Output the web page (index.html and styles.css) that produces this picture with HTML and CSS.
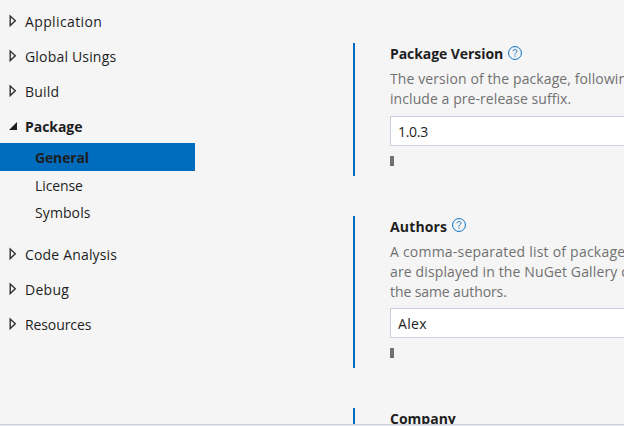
FILE: index.html
```html
<!DOCTYPE html>
<html lang="en">
<head>
<meta charset="utf-8">
<title>Project properties</title>
<link rel="stylesheet" href="styles.css">
</head>
<body>
<svg class="defs" width="0" height="0" aria-hidden="true">
  <symbol id="closed" viewBox="0 0 8 14"><path d="M1.7 2V11.6L6.8 6.8Z" fill="none" stroke="#303030" stroke-width="1.4"/></symbol>
  <symbol id="open" viewBox="0 0 8 14"><path d="M8.5 3V11H.5Z" fill="#1e1e1e"/></symbol>
  <symbol id="help" viewBox="0 0 14 14"><circle cx="7" cy="7" r="6.45" fill="none" stroke="#086fc4" stroke-width="1"/><path d="M5.1 5.3C5.1 2.9 8.9 2.9 8.9 5.2C8.9 6.7 7 6.6 7 8.5" fill="none" stroke="#086fc4" stroke-width="1"/><path d="M6.5 9.6H7.5V10.7H6.5Z" fill="#086fc4"/></symbol>
</svg>
<main class="window">
  <nav class="nav">
    <div class="row"><svg class="arrow"><use href="#closed"/></svg><span class="t-app">Application</span></div>
    <div class="row"><svg class="arrow"><use href="#closed"/></svg><span class="t-usings">Global Usings</span></div>
    <div class="row"><svg class="arrow"><use href="#closed"/></svg><span class="t-build">Build</span></div>
    <div class="row strong"><svg class="arrow"><use href="#open"/></svg><span class="t-package">Package</span></div>
    <div class="children">
      <div class="child selected"><span class="t-general">General</span></div>
      <div class="child"><span class="t-license">License</span></div>
      <div class="child"><span class="t-symbols">Symbols</span></div>
    </div>
    <div class="row"><svg class="arrow"><use href="#closed"/></svg><span class="t-code">Code Analysis</span></div>
    <div class="row"><svg class="arrow"><use href="#closed"/></svg><span class="t-debug">Debug</span></div>
    <div class="row"><svg class="arrow"><use href="#closed"/></svg><span class="t-resources">Resources</span></div>
  </nav>
  <div class="settings">
    <section class="setting version">
      <h2 class="title"><span class="t-version">Package Version</span><svg class="help"><use href="#help"/></svg></h2>
      <p class="desc"><span class="d-one">The version of the package, following</span><br><span class="d-two">include a pre-release suffix.</span></p>
      <div class="field"><span class="t-value">1.0.3</span></div>
      <div class="marker"></div>
    </section>
    <section class="setting authors">
      <h2 class="title"><span class="t-authors">Authors</span><svg class="help"><use href="#help"/></svg></h2>
      <p class="desc"><span class="d-three">A comma-separated list of package</span><br><span class="d-four">are displayed in the NuGet Gallery on</span><br><span class="d-five">the same authors.</span></p>
      <div class="field"><span class="t-alex">Alex</span></div>
      <div class="marker"></div>
    </section>
    <section class="setting company">
      <h2 class="title"><span class="t-company">Company</span></h2>
    </section>
  </div>
</main>
<footer class="edge"></footer>
</body>
</html>
```

FILE: styles.css
```css
* { box-sizing: border-box; }
body {
  margin: 0;
  height: 426px;
  display: flex;
  flex-direction: column;
  overflow: hidden;
  background: #f5f5f5;
  color: #1e1e1e;
  font: 14px/20px "Open Sans", "Noto Sans", sans-serif;
}
.defs { position: absolute; }
.window { display: flex; height: 424px; overflow: hidden; }
.nav { width: 353px; flex: none; padding-top: 4px; }
.row { height: 35px; padding-left: 8px; display: flex; align-items: center; }
.arrow { width: 9px; height: 14px; margin: -2px 8px 0 0; flex: none; }
.strong { font-weight: 700; }
.children { height: 94px; margin-top: -1px; }
.child { height: 27px; padding-left: 35px; display: flex; align-items: center; }
.selected { width: 195px; height: 28px; padding-top: 2px; background: #006cbe; font-weight: 700; margin-bottom: 1px; }
.settings { flex: none; width: 400px; padding-top: 43px; }
.setting { border-left: 2px solid #006cbe; padding-left: 35px; margin-bottom: 40px; }
.version { height: 133px; }
.authors { height: 152px; }
.company { height: 100px; }
.title { margin: 0; height: 25px; font-size: 14px; line-height: 22px; display: flex; }
.help { width: 14px; height: 14px; margin: 3px 0 0 5px; }
.authors .help { margin-top: 2px; }
.desc { margin: 1px 0 0; color: #717171; white-space: nowrap; }
.field { height: 30px; margin-top: 7px; padding: 2px 7px 0; background: #fff; border: 1px solid #cccedb; display: flex; align-items: center; }
.authors .field { margin-top: 6px; }
.marker { width: 4px; height: 10px; margin-top: 10px; background: #717171; }
.edge { height: 2px; background: #ececf4; border-top: 1px solid #cccedb; }

.t-app { letter-spacing: .38px; }
.t-usings { letter-spacing: .18px; }
.t-build { letter-spacing: .2px; }
.t-package { letter-spacing: -.05px; }
.t-general { letter-spacing: -.15px; }
.t-license { letter-spacing: -.1px; }
.t-symbols { letter-spacing: .1px; }
.t-code { letter-spacing: .17px; }
.t-debug { letter-spacing: .3px; }
.t-resources { letter-spacing: -.1px; }
.t-version { letter-spacing: -.07px; }
.t-authors { letter-spacing: .15px; }
.d-one { letter-spacing: .1px; }
.d-two { letter-spacing: .07px; }
.d-three { letter-spacing: .22px; }
.d-four { letter-spacing: .13px; }
.d-five { letter-spacing: -.1px; }
.t-value { letter-spacing: -.3px; }
.t-alex { letter-spacing: .3px; }
```
